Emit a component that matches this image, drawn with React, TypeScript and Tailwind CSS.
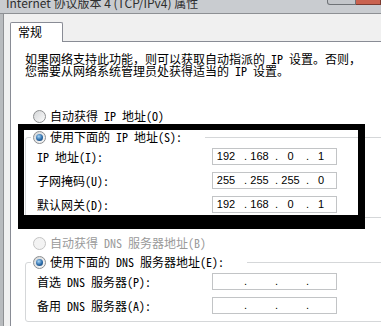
import React from "react";

const cjk = "font-[family-name:'Noto_Sans_Mono_CJK_SC','Noto_Sans_CJK_SC',monospace]";

function Radio({ checked, disabled }: { checked?: boolean; disabled?: boolean }) {
  return (
    <div
      className={
        disabled
          ? "w-[13px] h-[13px] shrink-0 rounded-full border border-[#c4c4c4] bg-[#f3f3f3] flex items-center justify-center"
          : "w-[13px] h-[13px] shrink-0 rounded-full border border-[#8c8e90] bg-linear-to-br from-[#d4d6d8] to-[#fbfbfb] flex items-center justify-center"
      }
    >
      {checked && (
        <div className="w-[7px] h-[7px] rounded-full bg-[radial-gradient(circle_at_40%_35%,#a8d6f7,#2a6aa8_55%,#14365c)]" />
      )}
    </div>
  );
}

function IpBox({ v }: { v?: string[] }) {
  const s = v ?? ["", "", "", ""];
  return (
    <div className="w-[125px] h-[17px] shrink-0 border border-[#c2c4c6] bg-white flex items-center text-[11px] leading-[15px] text-black font-['Liberation_Sans',sans-serif]">
      <span className="w-[31px] pr-[5px] text-center">{s[0]}</span>
      <span className="w-[4px]">.</span>
      <span className="w-[27px] pr-[4px] text-center">{s[1]}</span>
      <span className="w-[4px]">.</span>
      <span className="w-[27px] pr-[4px] text-center">{s[2]}</span>
      <span className="w-[4px]">.</span>
      <span className="w-[26px] pr-[4px] text-center">{s[3]}</span>
    </div>
  );
}

function Row({ label, v }: { label: string; v?: string[] }) {
  return (
    <div className="flex items-center h-[17px]">
      <div className="w-[175px] text-[12px] leading-[17px] text-black whitespace-pre">{label}</div>
      <IpBox v={v} />
    </div>
  );
}

export default function App() {
  return (
    <div className={`relative w-[381px] h-[326px] overflow-hidden bg-[#f0f0f0] flex flex-col ${cjk}`}>
      {/* title bar */}
      <div className="h-[14px] shrink-0 bg-[#c9ccd0] border-b border-[#8d9094] flex overflow-hidden">
        <div className="pl-[6px] -mt-[3px] text-[12px] leading-[12px] text-[#2e2e2e] whitespace-nowrap font-['Noto_Sans_CJK_SC',sans-serif]">
          Internet 协议版本 4 (TCP/IPv4) 属性
        </div>
        <div className="ml-auto flex items-start h-[5px]">
          <div className="w-[29px] h-[5px] border border-t-0 border-[#6f7377] bg-[#c3c6ca] rounded-bl-[3px]" />
          <div className="w-[25px] h-[5px] border border-t-0 border-l-0 border-[#7b3a2f] bg-[#c9624f]" />
        </div>
      </div>

      {/* body */}
      <div className="flex-1 flex min-h-0">
        <div className="w-[4px] shrink-0 bg-[#b8bbbe] border-r border-[#8e9093]" />
        <div className="flex-1 flex flex-col pl-[6px] min-w-0">
          {/* tab row */}
          <div className="flex shrink-0">
            <div className="relative z-10 mt-[8px] -mb-px h-[20px] w-[53px] bg-white border border-b-0 border-[#898c95] rounded-t-[2px] pl-[7px] text-[12px] leading-[18px] text-black">
              常规
            </div>
          </div>
          {/* panel */}
          <div className="flex-1 bg-white border-l border-t border-[#898c95] flex flex-col">
            <div className="mt-[11px] pl-[14px] text-[12px] leading-[12px] text-black whitespace-pre">
              <div>如果网络支持此功能，则可以获取自动指派的 IP 设置。否则，</div>
              <div>您需要从网络系统管理员处获得适当的 IP 设置。</div>
            </div>

            <div className="mt-[32px] ml-[22px] h-[14px] flex items-center gap-[4px]">
              <Radio />
              <span className="text-[12px] leading-[14px] text-black whitespace-pre">自动获得 IP 地址(O)</span>
            </div>

            <fieldset className="mt-[7px] ml-[14px] w-[380px] shrink-0 border border-[#d5d7d9] rounded-[3px] pb-[4px]">
              <legend className="ml-[5px] pl-[2px] pr-[23px]">
                <div className="h-[14px] flex items-center gap-[4px]">
                  <Radio checked />
                  <span className="text-[12px] leading-[14px] text-black whitespace-pre">使用下面的 IP 地址(S):</span>
                </div>
              </legend>
              <div className="pt-[4px] pl-[11px] flex flex-col gap-[7px]">
                <Row label="IP 地址(I):" v={["192", "168", "0", "1"]} />
                <Row label="子网掩码(U):" v={["255", "255", "255", "0"]} />
                <Row label="默认网关(D):" v={["192", "168", "0", "1"]} />
              </div>
            </fieldset>

            <div className="mt-[18px] ml-[22px] h-[14px] flex items-center gap-[4px]">
              <Radio disabled />
              <span className="text-[12px] leading-[14px] text-[#9a9a9a] whitespace-pre">自动获得 DNS 服务器地址(B)</span>
            </div>

            <fieldset className="mt-[5px] ml-[14px] w-[380px] shrink-0 border border-[#d5d7d9] rounded-[3px] pb-[7px]">
              <legend className="ml-[5px] pl-[2px] pr-[23px]">
                <div className="h-[14px] flex items-center gap-[4px]">
                  <Radio checked />
                  <span className="text-[12px] leading-[14px] text-black whitespace-pre">使用下面的 DNS 服务器地址(E):</span>
                </div>
              </legend>
              <div className="pt-[4px] pl-[11px] flex flex-col gap-[7px]">
                <Row label="首选 DNS 服务器(P):" />
                <Row label="备用 DNS 服务器(A):" />
              </div>
            </fieldset>
          </div>
        </div>
      </div>

      {/* annotation box */}
      <div className="absolute left-[18px] top-[124px] w-[347px] h-[105px] border-black border-t-[6px] border-l-[6px] border-r-[7px] border-b-[14px] pointer-events-none" />
    </div>
  );
}
